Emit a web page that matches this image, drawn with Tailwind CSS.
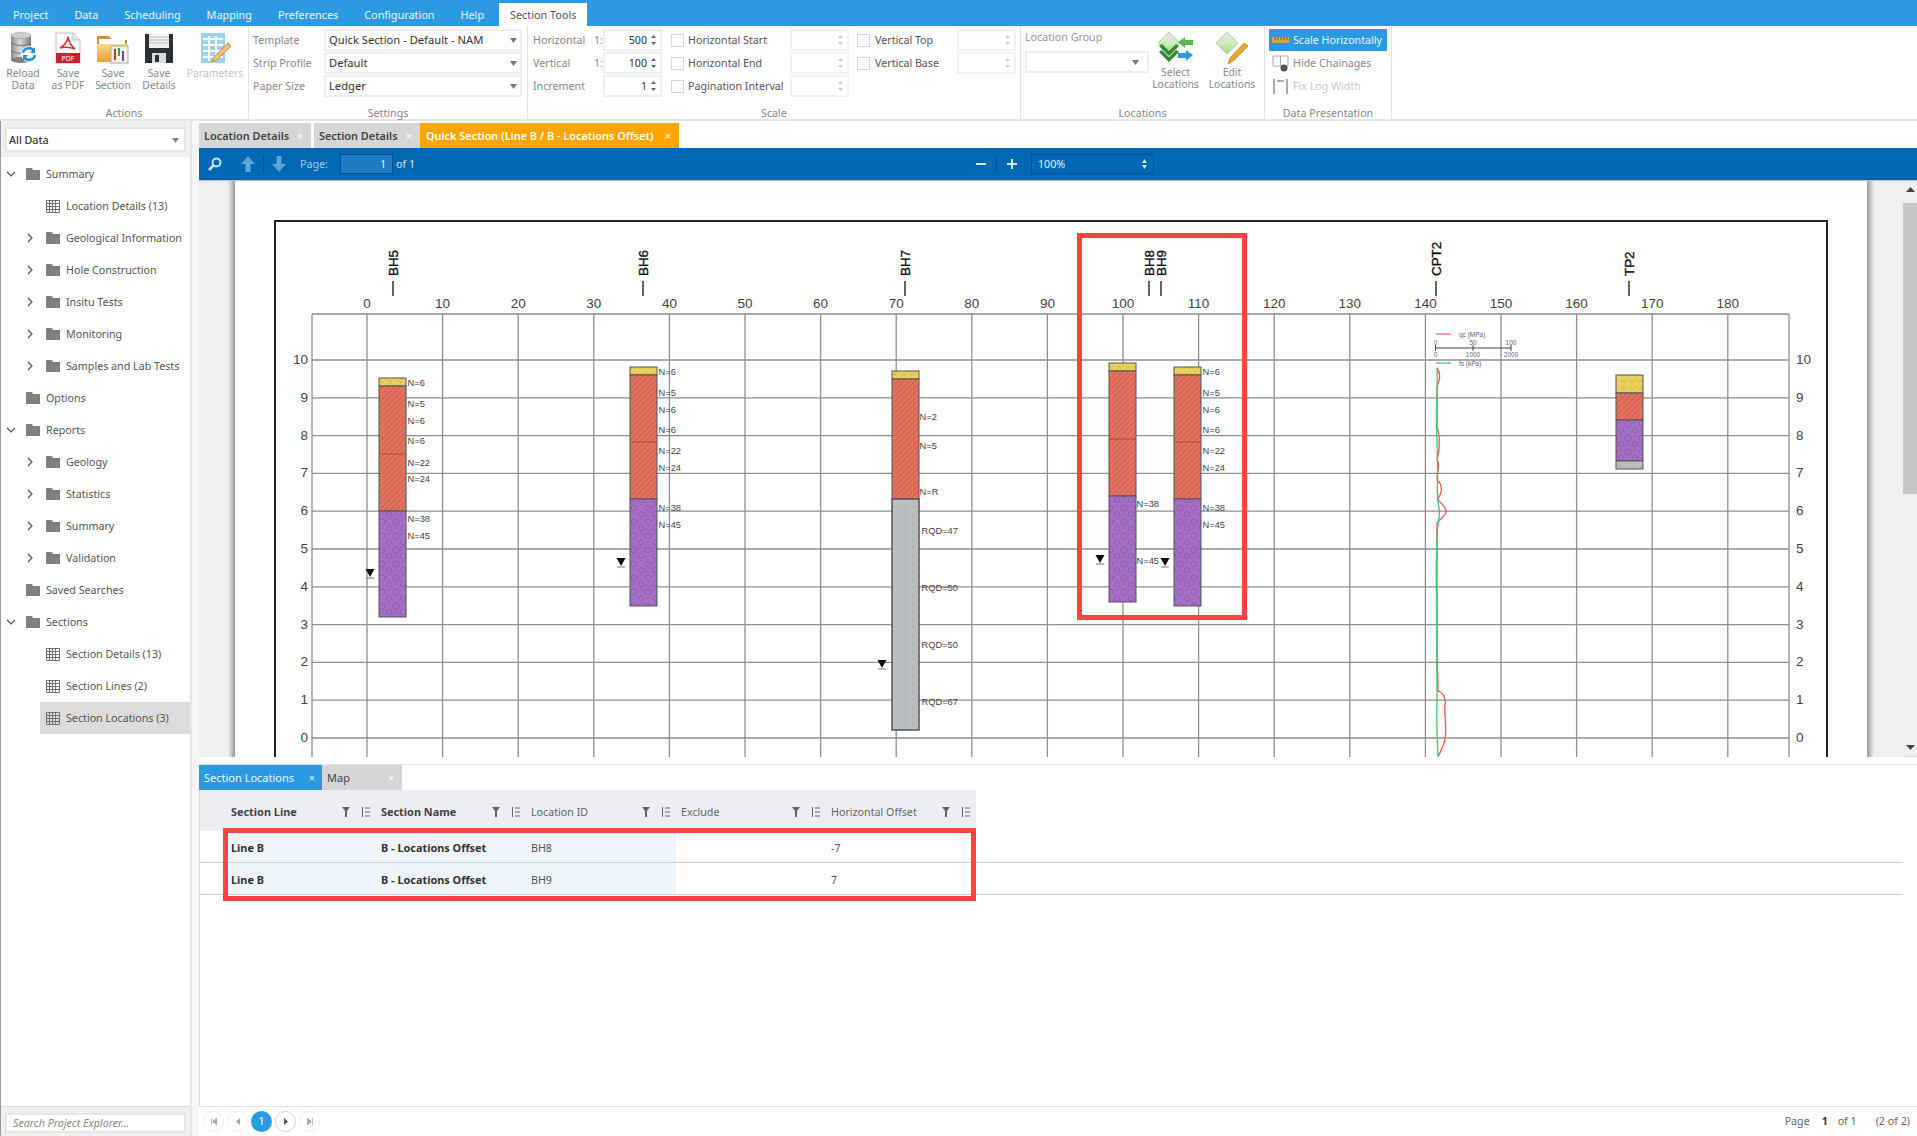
<!DOCTYPE html>
<html lang="en">
<head>
<meta charset="utf-8">
<title>Section Tools</title>
<script src="https://cdn.jsdelivr.net/npm/@tailwindcss/browser@4"></script>
</head>
<body class="font-['Noto_Sans',sans-serif] text-[10.7px] text-[#555] bg-white">
<svg class="absolute w-0 h-0" aria-hidden="true">
  <defs>
    <linearGradient id="dbg" x1="0" x2="1" y1="0" y2="0"><stop offset="0" stop-color="#8d8d8d"/><stop offset=".45" stop-color="#d9d9d9"/><stop offset="1" stop-color="#7c7c7c"/></linearGradient>
    <linearGradient id="fold" x1="0" x2="0" y1="0" y2="1"><stop offset="0" stop-color="#fbd98a"/><stop offset="1" stop-color="#e8a233"/></linearGradient>
    <linearGradient id="dia" x1="0" x2="0" y1="0" y2="1"><stop offset="0" stop-color="#e6e6e6"/><stop offset=".5" stop-color="#cfeebb"/><stop offset="1" stop-color="#9ede78"/></linearGradient>
    <linearGradient id="shl" x1="0" x2="1" y1="0" y2="0"><stop offset="0" stop-color="#f0f0f0"/><stop offset="1" stop-color="#999"/></linearGradient>
    <linearGradient id="shr" x1="0" x2="1" y1="0" y2="0"><stop offset="0" stop-color="#999"/><stop offset="1" stop-color="#f0f0f0"/></linearGradient>
    <pattern id="pr" patternUnits="userSpaceOnUse" width="4" height="4" patternTransform="rotate(-45)"><rect width="4" height="4" fill="#e3725f"/><rect width="4" height="1.100" fill="#cf6152"/></pattern>
    <pattern id="pp" patternUnits="userSpaceOnUse" width="14" height="14"><rect width="14" height="14" fill="#a56fc4"/><circle cx="4" cy="4" r="3" fill="none" stroke="#8d56ae" stroke-width=".8"/><circle cx="11" cy="10" r="2.600" fill="none" stroke="#8d56ae" stroke-width=".8"/><path d="M0 13L5 9M8 3L13 0" stroke="#925db3" stroke-width=".8"/></pattern>
    <pattern id="py" patternUnits="userSpaceOnUse" width="9" height="7"><rect width="9" height="7" fill="#e9d060"/><path d="M1 5l2-3 2 3M6 2h2" stroke="#c8a83c" stroke-width=".7" fill="none"/></pattern>
    <pattern id="pg" patternUnits="userSpaceOnUse" width="7" height="8"><rect width="7" height="8" fill="#babec0"/><circle cx="3" cy="3" r=".7" fill="#8c9194"/></pattern>
  </defs>
</svg>
<div class="w-[1917px] h-[1136px] overflow-hidden flex flex-col">

  <!-- menu bar -->
  <nav class="h-[26px] bg-[#2b9ae3] flex items-end text-[#eaf5fd] text-[10.83px] shrink-0">
    <span class="px-[13px] h-[23px] leading-[23px]">Project</span>
    <span class="px-[13px] h-[23px] leading-[23px]">Data</span>
    <span class="px-[13px] h-[23px] leading-[23px]">Scheduling</span>
    <span class="px-[13px] h-[23px] leading-[23px]">Mapping</span>
    <span class="px-[13px] h-[23px] leading-[23px]">Preferences</span>
    <span class="px-[13px] h-[23px] leading-[23px]">Configuration</span>
    <span class="px-[13px] h-[23px] leading-[23px]">Help</span>
    <span class="ml-[2px] px-[11px] h-[23px] leading-[23px] bg-white text-[#555]">Section Tools</span>
  </nav>

  <!-- ribbon -->
  <section class="h-[95px] flex border-b-2 border-[#e8e8e8] shrink-0 text-[#888]">

    <div class="w-[249px] flex flex-col border-r border-[#e4e4e4]">
      <div class="flex-1 flex pt-[6px] text-center leading-[12px] text-[10.4px]">
        <div class="w-[46px] flex flex-col items-center">
          <svg width="30" height="32" viewBox="0 0 30 32"><rect x="3" y="3" width="20" height="25" fill="url(#dbg)"/><ellipse cx="13" cy="28" rx="10" ry="3" fill="#808080"/><ellipse cx="13" cy="3.500" rx="10" ry="3" fill="#cfcfcf" stroke="#888" stroke-width=".5"/><path d="M3 11q10 5 20 0M3 19q10 5 20 0" stroke="#777" fill="none"/><circle cx="21" cy="22" r="8" fill="#fff"/><path d="M15 21a6 6 0 0 1 11-2M27 23a6 6 0 0 1-11 2" stroke="#2690e0" stroke-width="2.600" fill="none"/><path d="M27 15v6h-5zM15 29v-6h5z" fill="#2690e0"/></svg>
          <span class="mt-[3px]">Reload<br>Data</span>
        </div>
        <div class="w-[44px] flex flex-col items-center">
          <svg width="28" height="32" viewBox="0 0 28 32"><path d="M2 1h17l7 7v23H2z" fill="#fff" stroke="#bbb"/><path d="M19 1v7h7" fill="#e8e8e8" stroke="#bbb"/><path d="M14 5c-1 5-4 9-8 11 4-1 10-1 15 1-4-3-6-7-7-12z" fill="none" stroke="#d8332c" stroke-width="1.500"/><rect x="2" y="21" width="24" height="10" fill="#c8222a"/><text x="14" y="29" text-anchor="middle" font-size="7" fill="#fff">PDF</text></svg>
          <span class="mt-[3px]">Save<br>as PDF</span>
        </div>
        <div class="w-[46px] flex flex-col items-center">
          <svg width="34" height="32" viewBox="0 0 34 32"><path d="M1 8V4h12l3 4h15v22H1z" fill="#d29331"/><rect x="3" y="7" width="26" height="6" fill="#fff"/><path d="M1 12h31v18H1z" fill="url(#fold)"/><rect x="15" y="14" width="17" height="17" fill="#f6f0e2" stroke="#aaa"/><path d="M19 17v11" stroke="#c0392b" stroke-width="2"/><path d="M23 16v8" stroke="#3f9b47" stroke-width="2"/><path d="M27 19v10" stroke="#6b4aa8" stroke-width="2"/></svg>
          <span class="mt-[3px]">Save<br>Section</span>
        </div>
        <div class="w-[46px] flex flex-col items-center">
          <svg width="30" height="32" viewBox="0 0 30 32"><path d="M1 2h28v29H1z" fill="#2c3038"/><rect x="5" y="2" width="20" height="14" fill="#f1f1f1"/><path d="M5 5h20M5 8h20M5 11h20" stroke="#bbb"/><rect x="8" y="21" width="14" height="10" fill="#dcdcdc"/><rect x="11" y="23" width="4" height="7" fill="#2c3038"/></svg>
          <span class="mt-[3px]">Save<br>Details</span>
        </div>
        <div class="w-[66px] flex flex-col items-center text-[#c2c2c2]">
          <svg width="32" height="32" viewBox="0 0 32 32"><rect x="2" y="1" width="24" height="30" fill="#9fd0f2"/><path d="M4 7h20M4 13h20M4 19h20M4 25h20M10 4v25M17 4v25" stroke="#fff" stroke-width="2"/><path d="M29 11l3 3-14 14-5 2 2-5z" fill="#e9c46a" stroke="#c07a3c" stroke-width=".8"/></svg>
          <span class="mt-[3px]">Parameters</span>
        </div>
      </div>
      <div class="h-[11px] leading-[11px] text-center">Actions</div>
    </div>

    <div class="w-[279px] flex flex-col border-r border-[#e4e4e4]">
      <div class="flex-1 pt-[3px] flex flex-col gap-px">
        <div class="flex items-center h-[22px]"><span class="w-[75px] pl-[4px]">Template</span><div class="w-[198px] h-[22px] border-2 border-[#eeeeee] flex items-center justify-between px-[3px] text-[11.2px] text-[#333]">Quick Section - Default - NAM<svg width="7" height="5" viewBox="0 0 7 5"><path d="M0 0h7L3.500 5z" fill="#777"/></svg></div></div>
        <div class="flex items-center h-[22px]"><span class="w-[75px] pl-[4px]">Strip Profile</span><div class="w-[198px] h-[22px] border-2 border-[#eeeeee] flex items-center justify-between px-[3px] text-[11.2px] text-[#333]">Default<svg width="7" height="5" viewBox="0 0 7 5"><path d="M0 0h7L3.500 5z" fill="#777"/></svg></div></div>
        <div class="flex items-center h-[22px]"><span class="w-[75px] pl-[4px]">Paper Size</span><div class="w-[198px] h-[22px] border-2 border-[#eeeeee] flex items-center justify-between px-[3px] text-[11.2px] text-[#333]">Ledger<svg width="7" height="5" viewBox="0 0 7 5"><path d="M0 0h7L3.500 5z" fill="#777"/></svg></div></div>
      </div>
      <div class="h-[11px] leading-[11px] text-center">Settings</div>
    </div>

    <div class="w-[493px] flex flex-col border-r border-[#e4e4e4]">
      <div class="flex-1 pt-[3px] pl-[5px] grid grid-cols-[61px_9px_59px_9px_17px_102px_59px_8px_18px_82px_59px] grid-rows-[22px_22px_22px] gap-y-px items-center">
        <span>Horizontal</span><span>1:</span>
        <div class="h-[22px] border-2 border-[#eeeeee] flex items-center justify-end text-[#333]">500<svg class="mx-[3px]" width="7" height="12" viewBox="0 0 7 12"><path d="M3.500 1L6 4H1zM3.500 11L1 8h5z" fill="#666"/></svg></div>
        <span></span><span class="w-[13px] h-[13px] border border-[#d8d8d8]"></span><span class="text-[#555]">Horizontal Start</span>
        <div class="h-[22px] border-2 border-[#f2f2f2] flex items-center justify-end"><svg class="mx-[3px]" width="7" height="12" viewBox="0 0 7 12"><path d="M3.500 1L6 4H1zM3.500 11L1 8h5z" fill="#ccc"/></svg></div>
        <span></span><span class="w-[13px] h-[13px] border border-[#d8d8d8]"></span><span class="text-[#555]">Vertical Top</span>
        <div class="h-[22px] border-2 border-[#f2f2f2] flex items-center justify-end"><svg class="mx-[3px]" width="7" height="12" viewBox="0 0 7 12"><path d="M3.500 1L6 4H1zM3.500 11L1 8h5z" fill="#ccc"/></svg></div>

        <span>Vertical</span><span>1:</span>
        <div class="h-[22px] border-2 border-[#eeeeee] flex items-center justify-end text-[#333]">100<svg class="mx-[3px]" width="7" height="12" viewBox="0 0 7 12"><path d="M3.500 1L6 4H1zM3.500 11L1 8h5z" fill="#666"/></svg></div>
        <span></span><span class="w-[13px] h-[13px] border border-[#d8d8d8]"></span><span class="text-[#555]">Horizontal End</span>
        <div class="h-[22px] border-2 border-[#f2f2f2] flex items-center justify-end"><svg class="mx-[3px]" width="7" height="12" viewBox="0 0 7 12"><path d="M3.500 1L6 4H1zM3.500 11L1 8h5z" fill="#ccc"/></svg></div>
        <span></span><span class="w-[13px] h-[13px] border border-[#d8d8d8]"></span><span class="text-[#555]">Vertical Base</span>
        <div class="h-[22px] border-2 border-[#f2f2f2] flex items-center justify-end"><svg class="mx-[3px]" width="7" height="12" viewBox="0 0 7 12"><path d="M3.500 1L6 4H1zM3.500 11L1 8h5z" fill="#ccc"/></svg></div>

        <span>Increment</span><span></span>
        <div class="h-[22px] border-2 border-[#eeeeee] flex items-center justify-end text-[#333]">1<svg class="mx-[3px]" width="7" height="12" viewBox="0 0 7 12"><path d="M3.500 1L6 4H1zM3.500 11L1 8h5z" fill="#666"/></svg></div>
        <span></span><span class="w-[13px] h-[13px] border border-[#d8d8d8]"></span><span class="text-[#555] whitespace-nowrap">Pagination Interval</span>
        <div class="h-[22px] border-2 border-[#f2f2f2] flex items-center justify-end"><svg class="mx-[3px]" width="7" height="12" viewBox="0 0 7 12"><path d="M3.500 1L6 4H1zM3.500 11L1 8h5z" fill="#ccc"/></svg></div>
      </div>
      <div class="h-[11px] leading-[11px] text-center">Scale</div>
    </div>

    <div class="w-[244px] flex flex-col border-r border-[#e4e4e4]">
      <div class="flex-1 flex">
        <div class="w-[124px] ml-[4px] pt-[4px] text-[#999]">
          <div class="h-[15px] leading-[15px]">Location Group</div>
          <div class="mt-[6px] h-[22px] border-2 border-[#eeeeee] flex items-center justify-end px-[8px]"><svg width="7" height="5" viewBox="0 0 7 5"><path d="M0 0h7L3.500 5z" fill="#777"/></svg></div>
        </div>
        <div class="w-[53px] pt-[5px] flex flex-col items-center leading-[12px] text-center text-[10.4px]">
          <svg width="36" height="34" viewBox="0 0 36 34"><path d="M11 1l11 11-11 11L0 12z" fill="url(#dia)" stroke="#aaa" stroke-width=".6"/><path d="M1 15l10 10 10-10-3-2-7 7-7-7zM1 21l10 10 10-10-3-2-7 7-7-7z" fill="#2f8c2f"/><path d="M20 11l7-5v3h8v5h-8v3z" fill="#5cb848"/><path d="M35 24l-7-5v3h-8v5h8v3z" fill="#2c9ce8"/></svg>
          <span class="mt-[1px]">Select<br>Locations</span>
        </div>
        <div class="w-[60px] pt-[5px] flex flex-col items-center leading-[12px] text-center text-[10.4px]">
          <svg width="34" height="34" viewBox="0 0 34 34"><path d="M12 1l11 11-11 11L1 12z" fill="url(#dia)" stroke="#aaa" stroke-width=".6"/><path d="M29 12l4 3-15 15-5 3 2-6z" fill="#eda72e" stroke="#b76d1c" stroke-width=".7"/></svg>
          <span class="mt-[1px]">Edit<br>Locations</span>
        </div>
      </div>
      <div class="h-[11px] leading-[11px] text-center">Locations</div>
    </div>

    <div class="w-[127px] flex flex-col border-r border-[#e4e4e4]">
      <div class="flex-1 pt-[3px] pl-[4px] flex flex-col gap-px">
        <div class="w-[118px] h-[22px] bg-[#2b9ae3] text-[#eaf5fd] flex items-center whitespace-nowrap pl-[3px] gap-[4px]"><svg width="17" height="6" viewBox="0 0 17 6" class="shrink-0"><rect width="17" height="6" fill="#d9a441"/><path d="M3 0v3M6 0v3M9 0v3M12 0v3M15 0v3" stroke="#7c5a1a"/></svg>Scale Horizontally</div>
        <div class="h-[22px] flex items-center pl-[3px] gap-[4px] whitespace-nowrap"><svg width="17" height="17" viewBox="0 0 17 17" class="shrink-0"><path d="M1 1h15v10H1zM8.500 1v10" fill="none" stroke="#aaa"/><circle cx="12" cy="13" r="3.500" fill="#555"/></svg>Hide Chainages</div>
        <div class="h-[22px] flex items-center pl-[3px] gap-[4px] whitespace-nowrap text-[#c8c8c8]"><svg width="17" height="17" viewBox="0 0 17 17" class="shrink-0"><path d="M2 1v15M15 1v15M5 3h7" fill="none" stroke="#aaa" stroke-width="2"/></svg>Fix Log Width</div>
      </div>
      <div class="h-[11px] leading-[11px] text-center">Data Presentation</div>
    </div>
  </section>

  <!-- body -->
  <div class="flex-1 flex min-h-0">
    <!-- project explorer -->
    <aside class="w-[192px] shrink-0 flex flex-col border-l border-[#9a9a9a] border-r-2 border-r-[#e6e6e6]">
      <div class="h-[36px] bg-[#f0f0f0] pl-[4px] pr-[4px] pt-[6px] shrink-0">
        <div class="h-[25px] bg-white border-2 border-[#e6e6e6] flex items-center justify-between px-[2px] pt-[1px] text-[#333] font-medium">All Data<svg class="mr-[3px]" width="7" height="5" viewBox="0 0 7 5"><path d="M0 0h7L3.500 5z" fill="#888"/></svg></div>
      </div>
      <div class="flex-1 pt-px flex flex-col">
        <div class="h-[32px] flex items-center"><svg class="ml-[5px] w-[10px]" height="6" viewBox="0 0 10 6"><path d="M1 1l4 4 4-4" fill="none" stroke="#555" stroke-width="1.200"/></svg><svg class="ml-[10px]" width="14" height="12" viewBox="0 0 14 12"><path d="M0 0h6l1 2h7v10H0z" fill="#808080"/></svg><span class="ml-[6px]">Summary</span></div>
        <div class="h-[32px] flex items-center pl-[45px]"><svg width="14" height="13" viewBox="0 0 14 13"><path d="M.5.500h13v12H.5zM.5 3.500h13M.5 6.500h13M.5 9.500h13M3.500.500v12M6.500.500v12M9.500.500v12" fill="none" stroke="#707070"/></svg><span class="ml-[6px]">Location Details (13)</span></div>
        <div class="h-[32px] flex items-center"><svg class="ml-[26px]" width="6" height="10" viewBox="0 0 6 10"><path d="M1 1l4 4-4 4" fill="none" stroke="#555" stroke-width="1.200"/></svg><svg class="ml-[13px]" width="14" height="12" viewBox="0 0 14 12"><path d="M0 0h6l1 2h7v10H0z" fill="#808080"/></svg><span class="ml-[6px] whitespace-nowrap">Geological Information</span></div>
        <div class="h-[32px] flex items-center"><svg class="ml-[26px]" width="6" height="10" viewBox="0 0 6 10"><path d="M1 1l4 4-4 4" fill="none" stroke="#555" stroke-width="1.200"/></svg><svg class="ml-[13px]" width="14" height="12" viewBox="0 0 14 12"><path d="M0 0h6l1 2h7v10H0z" fill="#808080"/></svg><span class="ml-[6px]">Hole Construction</span></div>
        <div class="h-[32px] flex items-center"><svg class="ml-[26px]" width="6" height="10" viewBox="0 0 6 10"><path d="M1 1l4 4-4 4" fill="none" stroke="#555" stroke-width="1.200"/></svg><svg class="ml-[13px]" width="14" height="12" viewBox="0 0 14 12"><path d="M0 0h6l1 2h7v10H0z" fill="#808080"/></svg><span class="ml-[6px]">Insitu Tests</span></div>
        <div class="h-[32px] flex items-center"><svg class="ml-[26px]" width="6" height="10" viewBox="0 0 6 10"><path d="M1 1l4 4-4 4" fill="none" stroke="#555" stroke-width="1.200"/></svg><svg class="ml-[13px]" width="14" height="12" viewBox="0 0 14 12"><path d="M0 0h6l1 2h7v10H0z" fill="#808080"/></svg><span class="ml-[6px]">Monitoring</span></div>
        <div class="h-[32px] flex items-center"><svg class="ml-[26px]" width="6" height="10" viewBox="0 0 6 10"><path d="M1 1l4 4-4 4" fill="none" stroke="#555" stroke-width="1.200"/></svg><svg class="ml-[13px]" width="14" height="12" viewBox="0 0 14 12"><path d="M0 0h6l1 2h7v10H0z" fill="#808080"/></svg><span class="ml-[6px] whitespace-nowrap">Samples and Lab Tests</span></div>
        <div class="h-[32px] flex items-center pl-[25px]"><svg width="14" height="12" viewBox="0 0 14 12"><path d="M0 0h6l1 2h7v10H0z" fill="#808080"/></svg><span class="ml-[6px]">Options</span></div>
        <div class="h-[32px] flex items-center"><svg class="ml-[5px] w-[10px]" height="6" viewBox="0 0 10 6"><path d="M1 1l4 4 4-4" fill="none" stroke="#555" stroke-width="1.200"/></svg><svg class="ml-[10px]" width="14" height="12" viewBox="0 0 14 12"><path d="M0 0h6l1 2h7v10H0z" fill="#808080"/></svg><span class="ml-[6px]">Reports</span></div>
        <div class="h-[32px] flex items-center"><svg class="ml-[26px]" width="6" height="10" viewBox="0 0 6 10"><path d="M1 1l4 4-4 4" fill="none" stroke="#555" stroke-width="1.200"/></svg><svg class="ml-[13px]" width="14" height="12" viewBox="0 0 14 12"><path d="M0 0h6l1 2h7v10H0z" fill="#808080"/></svg><span class="ml-[6px]">Geology</span></div>
        <div class="h-[32px] flex items-center"><svg class="ml-[26px]" width="6" height="10" viewBox="0 0 6 10"><path d="M1 1l4 4-4 4" fill="none" stroke="#555" stroke-width="1.200"/></svg><svg class="ml-[13px]" width="14" height="12" viewBox="0 0 14 12"><path d="M0 0h6l1 2h7v10H0z" fill="#808080"/></svg><span class="ml-[6px]">Statistics</span></div>
        <div class="h-[32px] flex items-center"><svg class="ml-[26px]" width="6" height="10" viewBox="0 0 6 10"><path d="M1 1l4 4-4 4" fill="none" stroke="#555" stroke-width="1.200"/></svg><svg class="ml-[13px]" width="14" height="12" viewBox="0 0 14 12"><path d="M0 0h6l1 2h7v10H0z" fill="#808080"/></svg><span class="ml-[6px]">Summary</span></div>
        <div class="h-[32px] flex items-center"><svg class="ml-[26px]" width="6" height="10" viewBox="0 0 6 10"><path d="M1 1l4 4-4 4" fill="none" stroke="#555" stroke-width="1.200"/></svg><svg class="ml-[13px]" width="14" height="12" viewBox="0 0 14 12"><path d="M0 0h6l1 2h7v10H0z" fill="#808080"/></svg><span class="ml-[6px]">Validation</span></div>
        <div class="h-[32px] flex items-center pl-[25px]"><svg width="14" height="12" viewBox="0 0 14 12"><path d="M0 0h6l1 2h7v10H0z" fill="#808080"/></svg><span class="ml-[6px]">Saved Searches</span></div>
        <div class="h-[32px] flex items-center"><svg class="ml-[5px] w-[10px]" height="6" viewBox="0 0 10 6"><path d="M1 1l4 4 4-4" fill="none" stroke="#555" stroke-width="1.200"/></svg><svg class="ml-[10px]" width="14" height="12" viewBox="0 0 14 12"><path d="M0 0h6l1 2h7v10H0z" fill="#808080"/></svg><span class="ml-[6px]">Sections</span></div>
        <div class="h-[32px] flex items-center pl-[45px]"><svg width="14" height="13" viewBox="0 0 14 13"><path d="M.5.500h13v12H.5zM.5 3.500h13M.5 6.500h13M.5 9.500h13M3.500.500v12M6.500.500v12M9.500.500v12" fill="none" stroke="#707070"/></svg><span class="ml-[6px]">Section Details (13)</span></div>
        <div class="h-[32px] flex items-center pl-[45px]"><svg width="14" height="13" viewBox="0 0 14 13"><path d="M.5.500h13v12H.5zM.5 3.500h13M.5 6.500h13M.5 9.500h13M3.500.500v12M6.500.500v12M9.500.500v12" fill="none" stroke="#707070"/></svg><span class="ml-[6px]">Section Lines (2)</span></div>
        <div class="h-[32px] ml-[39px] flex items-center pl-[6px] bg-[#dcdcdc]"><svg width="14" height="13" viewBox="0 0 14 13"><path d="M.5.500h13v12H.5zM.5 3.500h13M.5 6.500h13M.5 9.500h13M3.500.500v12M6.500.500v12M9.500.500v12" fill="none" stroke="#707070"/></svg><span class="ml-[6px]">Section Locations (3)</span></div>
      </div>
      <div class="h-[30px] bg-[#f0f0f0] border-t border-[#dedede] pl-[4px] pr-[4px] pt-[6px] shrink-0">
        <div class="h-[20px] leading-[17px] bg-white border-2 border-[#e6e6e6] px-[6px] italic text-[#888]">Search Project Explorer...</div>
      </div>
    </aside>
    <div class="w-[7px] bg-[#f6f6f6] shrink-0"></div>

    <!-- workspace -->
    <main class="flex-1 min-w-0 flex flex-col">
      <div class="h-[27px] pt-[2px] flex items-stretch shrink-0 font-semibold text-[10.9px] text-[#444]">
        <span class="w-[112px] bg-[#d6d6d6] pl-[5px] leading-[26px] flex justify-between pr-[8px]">Location Details<span class="text-white font-normal">×</span></span>
        <span class="w-[106px] ml-[3px] bg-[#d6d6d6] pl-[5px] leading-[26px] flex justify-between pr-[8px]">Section Details<span class="text-white font-normal">×</span></span>
        <span class="w-[259px] bg-[#ffa500] pl-[6px] leading-[26px] flex justify-between pr-[8px] text-white whitespace-nowrap">Quick Section (Line B / B - Locations Offset)<span class="font-normal">×</span></span>
      </div>

      <div class="h-[33px] bg-[#0068b5] flex items-center pl-[9px] text-[#a9cdea] shrink-0 border-b border-[#bcbcbc]">
        <svg width="14" height="14" viewBox="0 0 14 14"><circle cx="8.500" cy="5.500" r="4" fill="none" stroke="#cfe4f5" stroke-width="2"/><path d="M5.500 8.500L1 13" stroke="#cfe4f5" stroke-width="2.500"/></svg>
        <svg class="ml-[19px]" width="14" height="16" viewBox="0 0 14 16"><path d="M7 0l7 8H9.500v8h-5V8H0z" fill="#5da3d9"/></svg>
        <span class="ml-[8px] w-px h-[16px] bg-[#00508c]"></span>
        <svg class="ml-[8px]" width="14" height="16" viewBox="0 0 14 16"><path d="M7 16L0 8h4.500V0h5v8H14z" fill="#5da3d9"/></svg>
        <span class="ml-[14px] w-[40px]">Page:</span>
        <span class="w-[53px] h-[20px] bg-[#1f7cc2] border border-[#00508c] text-right pr-[6px] leading-[18px] text-[#e3f0fa]">1</span>
        <span class="ml-[3px] w-[20px] whitespace-nowrap text-[#d5e6f5]">of 1</span>
        <svg class="ml-[559px]" width="12" height="12" viewBox="0 0 12 12"><path d="M1 6h10" stroke="#d6e8f6" stroke-width="2"/></svg>
        <span class="ml-[9px] w-px h-[16px] bg-[#00508c]"></span>
        <svg class="ml-[9px]" width="12" height="12" viewBox="0 0 12 12"><path d="M1 6h10M6 1v10" stroke="#d6e8f6" stroke-width="2"/></svg>
        <span class="ml-[13px] w-[123px] h-[20px] border border-[#00508c] flex items-center justify-between px-[6px] text-[#e3f0fa]">100%<svg width="5" height="10" viewBox="0 0 5 10"><path d="M2.500 0L5 4H0zM2.500 10L0 6h5z" fill="#d6e8f6"/></svg></span>
      </div>

      <!-- section drawing -->
      <div class="h-[576px] flex shrink-0 border-b border-[#dcdcdc]">
        <svg class="font-['Liberation_Sans',sans-serif] shrink-0" width="1704" height="576" viewBox="199 181 1704 576">
          <rect x="199" y="181" width="1704" height="576" fill="#f0f0f0"/>
          <rect x="228" y="181" width="7" height="576" fill="url(#shl)"/>
          <rect x="1867" y="181" width="7" height="576" fill="url(#shr)"/>
          <rect x="235" y="181" width="1632" height="576" fill="#fff"/>
          <path d="M275 760V221H1827V760" fill="none" stroke="#222" stroke-width="2"/>
          <path d="M367 314V757M442.600 314V757M518.200 314V757M593.800 314V757M669.400 314V757M745 314V757M820.600 314V757M896.200 314V757M971.800 314V757M1047.400 314V757M1123 314V757M1198.600 314V757M1274.200 314V757M1349.800 314V757M1425.400 314V757M1501 314V757M1576.600 314V757M1652.200 314V757M1727.800 314V757M312 314V757M1789 314V757M312 314H1789M312 360H1789M312 397.800H1789M312 435.600H1789M312 473.400H1789M312 511.200H1789M312 549H1789M312 586.800H1789M312 624.600H1789M312 662.400H1789M312 700.200H1789M312 738H1789" fill="none" stroke="#909090" stroke-width="1.300"/>
          <g font-size="13.500" fill="#444" text-anchor="middle">
            <text x="367" y="308">0</text><text x="442.600" y="308">10</text><text x="518.200" y="308">20</text><text x="593.800" y="308">30</text><text x="669.400" y="308">40</text><text x="745" y="308">50</text><text x="820.600" y="308">60</text><text x="896.200" y="308">70</text><text x="971.800" y="308">80</text><text x="1047.400" y="308">90</text><text x="1123" y="308">100</text><text x="1198.600" y="308">110</text><text x="1274.200" y="308">120</text><text x="1349.800" y="308">130</text><text x="1425.400" y="308">140</text><text x="1501" y="308">150</text><text x="1576.600" y="308">160</text><text x="1652.200" y="308">170</text><text x="1727.800" y="308">180</text>
          </g>
          <g font-size="13.500" fill="#444" text-anchor="end" transform="translate(0,-1)">
            <text x="308" y="365">10</text><text x="308" y="403">9</text><text x="308" y="441">8</text><text x="308" y="478">7</text><text x="308" y="516">6</text><text x="308" y="554">5</text><text x="308" y="592">4</text><text x="308" y="630">3</text><text x="308" y="667">2</text><text x="308" y="705">1</text><text x="308" y="743">0</text>
          </g>
          <g font-size="13.500" fill="#444" transform="translate(0,-1)">
            <text x="1796" y="365">10</text><text x="1796" y="403">9</text><text x="1796" y="441">8</text><text x="1796" y="478">7</text><text x="1796" y="516">6</text><text x="1796" y="554">5</text><text x="1796" y="592">4</text><text x="1796" y="630">3</text><text x="1796" y="667">2</text><text x="1796" y="705">1</text><text x="1796" y="743">0</text>
          </g>
          <!-- location names -->
          <g font-size="13.400" fill="#111" stroke="#111" stroke-width=".35">
            <text transform="translate(397.500,276) rotate(-90)">BH5</text>
            <text transform="translate(647.500,276) rotate(-90)">BH6</text>
            <text transform="translate(909.500,276) rotate(-90)">BH7</text>
            <text transform="translate(1153.500,276) rotate(-90)">BH8</text>
            <text transform="translate(1165.500,276) rotate(-90)">BH9</text>
            <text transform="translate(1440.500,276) rotate(-90)">CPT2</text>
            <text transform="translate(1633.500,276) rotate(-90)">TP2</text>
          </g>
          <path d="M393 281V296M643 281V296M905 281V296M1149 281V296M1161 281V296M1436 281V296M1629 281V296" stroke="#333" stroke-width="1.500"/>
          <!-- log columns -->
          <g stroke="#555" stroke-width="1">
            <rect x="379" y="378" width="27" height="8" fill="url(#py)"/><rect x="379" y="386" width="27" height="125" fill="url(#pr)"/><rect x="379" y="511" width="27" height="106" fill="url(#pp)"/>
            <rect x="630" y="367" width="27" height="8" fill="url(#py)"/><rect x="630" y="375" width="27" height="124" fill="url(#pr)"/><rect x="630" y="499" width="27" height="107" fill="url(#pp)"/>
            <rect x="892" y="371" width="27" height="8" fill="url(#py)"/><rect x="892" y="379" width="27" height="120" fill="url(#pr)"/><rect x="892" y="499" width="27" height="231" fill="url(#pg)" stroke-width="1.500"/>
            <rect x="1109" y="363" width="27" height="8" fill="url(#py)"/><rect x="1109" y="371" width="27" height="125" fill="url(#pr)"/><rect x="1109" y="496" width="27" height="106" fill="url(#pp)"/>
            <rect x="1174" y="367" width="27" height="8" fill="url(#py)"/><rect x="1174" y="375" width="27" height="124" fill="url(#pr)"/><rect x="1174" y="499" width="27" height="107" fill="url(#pp)"/>
            <rect x="1616" y="375" width="27" height="18" fill="url(#py)"/><rect x="1616" y="393" width="27" height="27" fill="url(#pr)"/><rect x="1616" y="420" width="27" height="41" fill="url(#pp)"/><rect x="1616" y="461" width="27" height="8" fill="url(#pg)"/>
          </g>
          <path d="M379 454H406M630 442H657M1109 439H1136M1174 442H1201" stroke="#b84638" stroke-width="1"/>
          <!-- test labels -->
          <g font-size="9.300" fill="#444" transform="translate(-.5,-1)">
            <text x="408" y="386.500">N=6</text><text x="408" y="407.500">N=5</text><text x="408" y="424.500">N=6</text><text x="408" y="444.500">N=6</text><text x="408" y="466.500">N=22</text><text x="408" y="482.500">N=24</text><text x="408" y="522.500">N=38</text><text x="408" y="539.500">N=45</text>
            <text x="659" y="375.500">N=6</text><text x="659" y="396.500">N=5</text><text x="659" y="413.500">N=6</text><text x="659" y="433.500">N=6</text><text x="659" y="454.500">N=22</text><text x="659" y="471.500">N=24</text><text x="659" y="511.500">N=38</text><text x="659" y="528.500">N=45</text>
            <text x="920" y="420.500">N=2</text><text x="920" y="449.500">N=5</text><text x="920" y="495.500">N=R</text><text x="922" y="534.500">RQD=47</text><text x="922" y="591.500">RQD=50</text><text x="922" y="648.500">RQD=50</text><text x="922" y="705.500">RQD=67</text>
            <text x="1137" y="507.500">N=38</text><text x="1137" y="564.500">N=45</text>
            <text x="1203" y="375.500">N=6</text><text x="1203" y="396.500">N=5</text><text x="1203" y="413.500">N=6</text><text x="1203" y="433.500">N=6</text><text x="1203" y="454.500">N=22</text><text x="1203" y="471.500">N=24</text><text x="1203" y="511.500">N=38</text><text x="1203" y="528.500">N=45</text>
          </g>
          <!-- water strikes -->
          <g fill="#111">
            <path d="M365.500 569h9L370 577z"/><path d="M616.500 558h9L621 566z"/><path d="M877.500 660h9L882 668z"/><path d="M1095.500 555h9L1100 563z"/><path d="M1160.500 558h9L1165 566z"/>
          </g>
          <path d="M366 578h8M617 567h8M878 669h8M1096 564h8M1161 567h8" stroke="#777" stroke-width="1"/>
          <!-- CPT trace -->
          <path d="M1436 334H1451" stroke="#f25a5a" stroke-width="1.200"/>
          <path d="M1436 363H1451" stroke="#33c46a" stroke-width="1.200"/>
          <path d="M1435.500 348H1511M1435.500 345V351M1473 345V351M1511 345V351" stroke="#444" stroke-width="1"/>
          <g font-size="6.500" fill="#666" text-anchor="middle">
            <text x="1435.500" y="345">0</text><text x="1473" y="345">50</text><text x="1511" y="345">100</text><text x="1435.500" y="357">0</text><text x="1473" y="357">1000</text><text x="1511" y="357">2000</text>
          </g>
          <g font-size="6.500" fill="#666"><text x="1459" y="336.500">qc (MPa)</text><text x="1459" y="365.500">fs (kPa)</text></g>
          <path d="M1437 368C1440 372 1441 378 1437 387C1437 400 1437 415 1437 427C1439 433 1440 438 1439 442C1440 450 1438 455 1437 460C1439 463 1439 466 1438 470C1437 475 1437 478 1437 480C1441 483 1442 487 1441 492C1440 496 1438 498 1438 500C1443 505 1447 508 1446 513C1443 518 1439 520 1437 523C1437 540 1437 550 1437 553C1437 580 1437 610 1437 640C1437 660 1438 680 1438 691C1444 693 1446 697 1445 705C1444 715 1447 725 1445 740C1443 748 1440 752 1438 757" fill="none" stroke="#f0554f" stroke-width="1.300"/>
          <path d="M1437 368C1438 385 1436 400 1436.500 427C1437 445 1438 470 1437.500 485C1436 500 1441 510 1439 518C1436 530 1436 560 1436.500 600C1436.500 640 1437 680 1437 700C1436.500 720 1437 740 1438 757" fill="none" stroke="#3ec674" stroke-width="1.300"/>
          <!-- annotation -->
          <rect x="1079.500" y="235.500" width="165" height="382" fill="none" stroke="#fb4343" stroke-width="5"/>
        </svg>
        <div class="w-[14px] bg-[#f0f0f0] flex flex-col items-center pt-[6px] pb-[6px]">
          <svg width="9" height="5" viewBox="0 0 9 5"><path d="M4.500 0L9 5H0z" fill="#444"/></svg>
          <div class="mt-[11px] w-full h-[291px] bg-[#c6c6c6]"></div>
          <svg class="mt-auto" width="9" height="5" viewBox="0 0 9 5"><path d="M4.500 5L0 0h9z" fill="#444"/></svg>
        </div>
      </div>

      <div class="h-[8px] shrink-0 border-b border-[#e4e4e4]"></div>

      <div class="h-[25px] flex shrink-0 text-[11px]">
        <span class="w-[123px] bg-[#2b9ae3] text-[#eaf5fd] pl-[5px] leading-[26px] flex justify-between pr-[7px]">Section Locations<span>×</span></span>
        <span class="w-[80px] bg-[#d6d6d6] text-[#444] pl-[5px] leading-[26px] flex justify-between pr-[8px]">Map<span class="text-white">×</span></span>
      </div>

      <!-- table -->
      <div class="flex-1 min-h-0 relative border-l border-[#d8d8d8]">
        <div class="w-[776px] h-[41px] pt-[3px] bg-[#eceef2] grid grid-cols-[26px_150px_150px_150px_150px_150px] items-center text-[#666]">
          <span></span>
          <div class="flex items-center pl-[5px] font-bold text-[10.9px] text-[#444]"><span class="w-[111px]">Section Line</span><svg width="8" height="10" viewBox="0 0 8 10"><path d="M0 0h8L5 4v6H3V4z" fill="#666"/></svg><svg class="ml-[12px]" width="8" height="10" viewBox="0 0 8 10"><path d="M.5 0v10M3 1h5M3 5h5M3 9h5" stroke="#666"/></svg></div>
          <div class="flex items-center pl-[5px] font-bold text-[10.9px] text-[#444]"><span class="w-[111px]">Section Name</span><svg width="8" height="10" viewBox="0 0 8 10"><path d="M0 0h8L5 4v6H3V4z" fill="#666"/></svg><svg class="ml-[12px]" width="8" height="10" viewBox="0 0 8 10"><path d="M.5 0v10M3 1h5M3 5h5M3 9h5" stroke="#666"/></svg></div>
          <div class="flex items-center pl-[5px]"><span class="w-[111px]">Location ID</span><svg width="8" height="10" viewBox="0 0 8 10"><path d="M0 0h8L5 4v6H3V4z" fill="#666"/></svg><svg class="ml-[12px]" width="8" height="10" viewBox="0 0 8 10"><path d="M.5 0v10M3 1h5M3 5h5M3 9h5" stroke="#666"/></svg></div>
          <div class="flex items-center pl-[5px]"><span class="w-[111px]">Exclude</span><svg width="8" height="10" viewBox="0 0 8 10"><path d="M0 0h8L5 4v6H3V4z" fill="#666"/></svg><svg class="ml-[12px]" width="8" height="10" viewBox="0 0 8 10"><path d="M.5 0v10M3 1h5M3 5h5M3 9h5" stroke="#666"/></svg></div>
          <div class="flex items-center pl-[5px]"><span class="w-[111px] whitespace-nowrap">Horizontal Offset</span><svg width="8" height="10" viewBox="0 0 8 10"><path d="M0 0h8L5 4v6H3V4z" fill="#666"/></svg><svg class="ml-[12px]" width="8" height="10" viewBox="0 0 8 10"><path d="M.5 0v10M3 1h5M3 5h5M3 9h5" stroke="#666"/></svg></div>
        </div>
        <div class="w-[1703px] h-[32px] border-b border-[#cfd3d9] grid grid-cols-[26px_150px_150px_150px_150px_150px] items-center">
          <span></span>
          <span class="h-full flex items-center pl-[5px] pt-[3px] bg-[#eef6fc] font-bold text-[10.9px] text-[#333]">Line B</span>
          <span class="h-full flex items-center pl-[5px] pt-[3px] bg-[#eef6fc] font-bold text-[10.9px] text-[#333]">B - Locations Offset</span>
          <span class="h-full flex items-center pl-[5px] pt-[3px] bg-[#eef6fc]">BH8</span>
          <span></span>
          <span class="pl-[5px] pt-[3px]">-7</span>
        </div>
        <div class="w-[1703px] h-[32px] border-b border-[#cfd3d9] grid grid-cols-[26px_150px_150px_150px_150px_150px] items-center">
          <span></span>
          <span class="h-full flex items-center pl-[5px] pt-[3px] bg-[#eef6fc] font-bold text-[10.9px] text-[#333]">Line B</span>
          <span class="h-full flex items-center pl-[5px] pt-[3px] bg-[#eef6fc] font-bold text-[10.9px] text-[#333]">B - Locations Offset</span>
          <span class="h-full flex items-center pl-[5px] pt-[3px] bg-[#eef6fc]">BH9</span>
          <span></span>
          <span class="pl-[5px] pt-[3px]">7</span>
        </div>
        <div class="absolute left-[23px] top-[38px] w-[753px] h-[73px] border-[5px] border-[#fb4343]"></div>
      </div>

      <!-- pager -->
      <footer class="h-[30px] border-t border-[#e4e4e4] flex items-center shrink-0 text-[#666]">
        <div class="flex items-center gap-[3px] ml-[4px]">
          <span class="w-[21px] h-[21px] rounded-full border border-[#eeeeee] flex items-center justify-center"><svg width="6" height="7" viewBox="0 0 6 7"><path d="M.5 0v7M6 0v7L1.500 3.500z" stroke="#aaa" fill="#aaa" stroke-width=".8"/></svg></span>
          <span class="w-[21px] h-[21px] rounded-full border border-[#eeeeee] flex items-center justify-center"><svg width="4" height="7" viewBox="0 0 4 7"><path d="M4 0v7L0 3.500z" fill="#aaa"/></svg></span>
          <span class="w-[21px] h-[21px] rounded-full bg-[#2b9ae3] text-white flex items-center justify-center">1</span>
          <span class="w-[21px] h-[21px] rounded-full border border-[#d4d4d4] flex items-center justify-center"><svg width="4" height="7" viewBox="0 0 4 7"><path d="M0 0v7l4-3.500z" fill="#555"/></svg></span>
          <span class="w-[21px] h-[21px] rounded-full border border-[#eeeeee] flex items-center justify-center"><svg width="6" height="7" viewBox="0 0 6 7"><path d="M5.500 0v7M0 0v7l4.500-3.500z" stroke="#aaa" fill="#aaa" stroke-width=".8"/></svg></span>
        </div>
        <div class="ml-auto mr-[7px] flex items-center whitespace-nowrap">
          <span class="w-[37px]">Page</span><span class="w-[16px] font-bold text-[#333]">1</span><span class="w-[38px]">of 1</span><span>(2 of 2)</span>
        </div>
      </footer>
    </main>
  </div>
</div>
</body>
</html>
